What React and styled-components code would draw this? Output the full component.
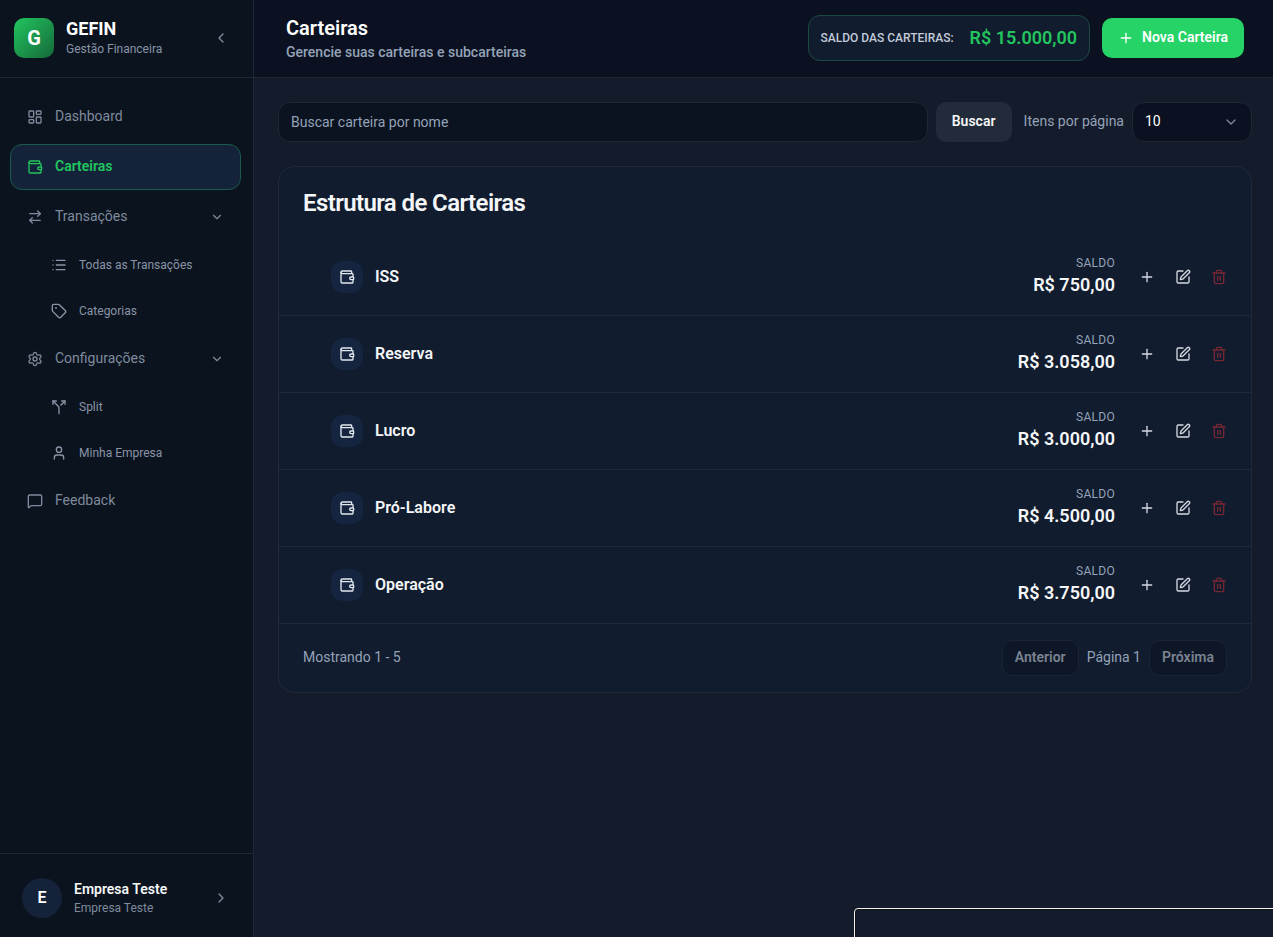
import React from "react";
import styled, { createGlobalStyle } from "styled-components";
import {
  LayoutDashboard, Wallet, ArrowRightLeft, List, Tag, Settings, Split, User,
  MessageSquare, ChevronLeft, ChevronDown, ChevronRight, Plus, SquarePen, Trash2,
} from "lucide-react";

const Global = createGlobalStyle`
  * { box-sizing: border-box; }
  html, body { margin: 0; padding: 0; height: 100%; overflow: hidden; background: #141b2b; }
  body { font-family: Roboto, "Liberation Sans", sans-serif; color: #fff; line-height: 1.5; }
`;

const Shell = styled.div`
  display: flex;
  height: 100vh;
  position: relative;
  overflow: hidden;
`;

const Sidebar = styled.aside`
  width: 254px;
  flex: none;
  display: flex;
  flex-direction: column;
  background: #0b131f;
  border-right: 1px solid #1e2936;
`;

const Brand = styled.div`
  height: 78px;
  flex: none;
  display: flex;
  align-items: center;
  padding: 0 24px 1px 14px;
  border-bottom: 1px solid #1e2936;
`;

const Logo = styled.div`
  width: 40px;
  height: 40px;
  border-radius: 10px;
  background: linear-gradient(135deg, #22c55e, #15693a);
  display: flex;
  align-items: center;
  justify-content: center;
  font-size: 20px;
  font-weight: 700;
  margin-right: 12px;
`;

const BrandText = styled.div`
  flex: 1;
  display: flex;
  flex-direction: column;
`;

const BrandName = styled.div`
  font-size: 18px;
  line-height: 20px;
  font-weight: 700;
  color: #fff;
`;

const BrandSub = styled.div`
  font-size: 12px;
  line-height: 16px;
  margin-top: 2px;
  color: #8994a6;
`;

const Nav = styled.nav`
  flex: 1;
  display: flex;
  flex-direction: column;
  padding: 16px 12px 0 10px;
`;

const NavItem = styled.div`
  height: 46px;
  flex: none;
  display: flex;
  align-items: center;
  gap: 12px;
  padding: 0 16px;
  margin-bottom: ${(p) => (p.$tight ? "0" : "4px")};
  border-radius: 12px;
  font-size: 14px;
  line-height: 20px;
  font-weight: ${(p) => (p.$active ? 600 : 400)};
  color: ${(p) => (p.$active ? "#22c55e" : "#7f8b9c")};
  background: ${(p) => (p.$active ? "#15233a" : "transparent")};
  border: 1px solid ${(p) => (p.$active ? "#1b5a4a" : "transparent")};
  & > svg:last-child:not(:first-child) { color: #7f8b9c; }
`;

const NavLabel = styled.span`
  flex: 1;
  margin-bottom: 2px;
`;

const SubList = styled.div`
  display: flex;
  flex-direction: column;
  margin: 2px 0;
`;

const SubItem = styled.div`
  height: 46px;
  display: flex;
  align-items: center;
  gap: 12px;
  padding-left: 41px;
  font-size: 12px;
  line-height: 16px;
  color: #8994a6;
`;

const Account = styled.div`
  height: 84px;
  flex: none;
  display: flex;
  align-items: center;
  padding: 4px 24px 0 22px;
  border-top: 1px solid #1e2936;
`;

const Avatar = styled.div`
  width: 40px;
  height: 40px;
  border-radius: 50%;
  background: #15233a;
  display: flex;
  align-items: center;
  justify-content: center;
  font-size: 16px;
  font-weight: 600;
  margin-right: 12px;
`;

const AccountText = styled.div`
  flex: 1;
`;

const AccountName = styled.div`
  font-size: 14px;
  line-height: 20px;
  font-weight: 600;
  color: #f4f6f8;
`;

const AccountSub = styled.div`
  font-size: 12px;
  line-height: 16px;
  margin-top: 1px;
  color: #7f8b9c;
`;

const Muted = styled.span`
  display: inline-flex;
  color: #7f8b9c;
`;

const Main = styled.main`
  flex: 1;
  min-width: 0;
  display: flex;
  flex-direction: column;
`;

const Header = styled.header`
  height: 78px;
  flex: none;
  display: flex;
  align-items: center;
  justify-content: space-between;
  padding: 0 29px 1px 32px;
  background: #0b1120;
  border-bottom: 1px solid #1e2936;
`;

const Title = styled.h1`
  margin: 0;
  font-size: 20px;
  line-height: 28px;
  font-weight: 600;
  color: #fff;
`;

const Subtitle = styled.p`
  margin: 0;
  font-size: 14px;
  line-height: 20px;
  font-weight: 500;
  color: #94a3b8;
`;

const HeaderActions = styled.div`
  display: flex;
  align-items: center;
  gap: 12px;
`;

const BalanceBox = styled.div`
  height: 46px;
  display: flex;
  align-items: center;
  gap: 16px;
  padding: 0 12px;
  border-radius: 12px;
  background: #111c2e;
  border: 1px solid #1b4a42;
`;

const BalanceLabel = styled.span`
  font-size: 12px;
  line-height: 16px;
  font-weight: 500;
  color: #c1cbd9;
`;

const BalanceValue = styled.span`
  font-size: 18px;
  line-height: 28px;
  font-weight: 600;
  color: #22c55e;
`;

const PrimaryButton = styled.button`
  height: 40px;
  display: flex;
  align-items: center;
  gap: 8px;
  padding: 0 16px;
  border: 0;
  border-radius: 10px;
  background: #25d366;
  color: #fff;
  font-family: inherit;
  font-size: 14px;
  line-height: 20px;
  font-weight: 600;
`;

const PrimaryLabel = styled.span`
  margin-bottom: 2px;
`;

const Content = styled.div`
  flex: 1;
  padding: 24px 21px 0 24px;
  display: flex;
  flex-direction: column;
  gap: 24px;
`;

const Filters = styled.div`
  display: flex;
  align-items: center;
  height: 40px;
`;

const SearchBox = styled.div`
  flex: 1;
  height: 40px;
  display: flex;
  align-items: center;
  padding: 0 12px;
  border-radius: 12px;
  background: #0b1220;
  border: 1px solid #1e2936;
  font-size: 14px;
  line-height: normal;
  color: #94a3b8;
`;

const SearchButton = styled.button`
  width: 76px;
  height: 40px;
  margin-left: 8px;
  padding: 0 0 2px;
  border: 0;
  border-radius: 10px;
  background: #222b39;
  color: #f4f6f8;
  font-family: inherit;
  font-size: 14px;
  line-height: 20px;
  font-weight: 600;
`;

const PerPage = styled.span`
  margin: 0 8px 2px 12px;
  font-size: 14px;
  line-height: 20px;
  color: #94a3b8;
`;

const Select = styled.div`
  width: 120px;
  height: 40px;
  display: flex;
  align-items: center;
  justify-content: space-between;
  padding: 0 12px;
  border-radius: 12px;
  background: #0b1120;
  border: 1px solid #1e2936;
  font-size: 14px;
  line-height: 20px;
  color: #fff;
`;

const SelectValue = styled.span`
  margin-bottom: 2px;
`;

const Card = styled.section`
  border-radius: 16px;
  background: #111c2e;
  border: 1px solid #1e2a3a;
`;

const CardTitle = styled.h2`
  margin: 0;
  height: 72px;
  padding: 20px 24px 0;
  font-size: 24px;
  line-height: 32px;
  font-weight: 600;
  letter-spacing: -0.6px;
  color: #f4f6f8;
`;

const Row = styled.div`
  height: 77px;
  display: flex;
  align-items: center;
  padding: 0 16px 0 52px;
  border-bottom: 1px solid #1e2a3a;
`;

const RowIcon = styled.div`
  width: 32px;
  height: 32px;
  border-radius: 12px;
  background: #15253f;
  color: #e2e8f0;
  display: flex;
  align-items: center;
  justify-content: center;
  margin-right: 12px;
`;

const RowName = styled.div`
  flex: 1;
  font-size: 16px;
  line-height: 24px;
  font-weight: 600;
  color: #f4f6f8;
`;

const RowBalance = styled.div`
  text-align: right;
  margin-right: 16px;
`;

const BalanceCaption = styled.div`
  font-size: 12px;
  line-height: 16px;
  letter-spacing: 0.3px;
  color: #94a3b8;
`;

const RowValue = styled.div`
  font-size: 18px;
  line-height: 28px;
  font-weight: 600;
  color: #f4f6f8;
`;

const IconButton = styled.button`
  width: 32px;
  height: 32px;
  padding: 0;
  margin-left: ${(p) => (p.$first ? "0" : "4px")};
  border: 0;
  background: transparent;
  display: flex;
  align-items: center;
  justify-content: center;
  color: ${(p) => (p.$danger ? "#762733" : "#d5dae2")};
`;

const CardFooter = styled.div`
  height: 68px;
  display: flex;
  align-items: center;
  justify-content: space-between;
  padding: 0 24px;
`;

const FooterText = styled.span`
  margin-bottom: 2px;
  font-size: 14px;
  line-height: 20px;
  color: #94a3b8;
`;

const Pager = styled.div`
  display: flex;
  align-items: center;
  gap: 8px;
`;

const PagerButton = styled.button`
  height: 36px;
  padding: 0 12px 2px;
  border-radius: 10px;
  background: #0e1727;
  border: 1px solid #1a2433;
  color: #7b8391;
  font-family: inherit;
  font-size: 14px;
  line-height: 20px;
  font-weight: 600;
`;

const ToastFrame = styled.div`
  position: absolute;
  left: 854px;
  top: 908px;
  width: 440px;
  height: 60px;
  border: 1px solid #f2f2f2;
  border-radius: 4px;
  box-shadow: inset 0 0 0 1px #111;
  background: #141b2b;
`;

const rows = [
  ["ISS", "R$ 750,00"],
  ["Reserva", "R$ 3.058,00"],
  ["Lucro", "R$ 3.000,00"],
  ["Pró-Labore", "R$ 4.500,00"],
  ["Operação", "R$ 3.750,00"],
];

export default function App() {
  return (
    <Shell>
      <Global />
      <Sidebar>
        <Brand>
          <Logo>G</Logo>
          <BrandText>
            <BrandName>GEFIN</BrandName>
            <BrandSub>Gestão Financeira</BrandSub>
          </BrandText>
          <Muted><ChevronLeft size={16} /></Muted>
        </Brand>
        <Nav>
          <NavItem><LayoutDashboard size={16} /><NavLabel>Dashboard</NavLabel></NavItem>
          <NavItem $active><Wallet size={16} /><NavLabel>Carteiras</NavLabel></NavItem>
          <NavItem $tight><ArrowRightLeft size={16} /><NavLabel>Transações</NavLabel><ChevronDown size={14} /></NavItem>
          <SubList>
            <SubItem><List size={16} />Todas as Transações</SubItem>
            <SubItem><Tag size={16} />Categorias</SubItem>
          </SubList>
          <NavItem $tight><Settings size={16} /><NavLabel>Configurações</NavLabel><ChevronDown size={14} /></NavItem>
          <SubList>
            <SubItem><Split size={16} />Split</SubItem>
            <SubItem><User size={16} />Minha Empresa</SubItem>
          </SubList>
          <NavItem><MessageSquare size={16} /><NavLabel>Feedback</NavLabel></NavItem>
        </Nav>
        <Account>
          <Avatar>E</Avatar>
          <AccountText>
            <AccountName>Empresa Teste</AccountName>
            <AccountSub>Empresa Teste</AccountSub>
          </AccountText>
          <Muted><ChevronRight size={16} /></Muted>
        </Account>
      </Sidebar>
      <Main>
        <Header>
          <div>
            <Title>Carteiras</Title>
            <Subtitle>Gerencie suas carteiras e subcarteiras</Subtitle>
          </div>
          <HeaderActions>
            <BalanceBox>
              <BalanceLabel>SALDO DAS CARTEIRAS:</BalanceLabel>
              <BalanceValue>R$ 15.000,00</BalanceValue>
            </BalanceBox>
            <PrimaryButton><Plus size={16} /><PrimaryLabel>Nova Carteira</PrimaryLabel></PrimaryButton>
          </HeaderActions>
        </Header>
        <Content>
          <Filters>
            <SearchBox>Buscar carteira por nome</SearchBox>
            <SearchButton>Buscar</SearchButton>
            <PerPage>Itens por página</PerPage>
            <Select><SelectValue>10</SelectValue><Muted><ChevronDown size={16} /></Muted></Select>
          </Filters>
          <Card>
            <CardTitle>Estrutura de Carteiras</CardTitle>
            {rows.map(([name, value]) => (
              <Row key={name}>
                <RowIcon><Wallet size={16} /></RowIcon>
                <RowName>{name}</RowName>
                <RowBalance>
                  <BalanceCaption>SALDO</BalanceCaption>
                  <RowValue>{value}</RowValue>
                </RowBalance>
                <IconButton $first><Plus size={16} /></IconButton>
                <IconButton><SquarePen size={16} /></IconButton>
                <IconButton $danger><Trash2 size={16} /></IconButton>
              </Row>
            ))}
            <CardFooter>
              <FooterText>Mostrando 1 - 5</FooterText>
              <Pager>
                <PagerButton>Anterior</PagerButton>
                <FooterText>Página 1</FooterText>
                <PagerButton>Próxima</PagerButton>
              </Pager>
            </CardFooter>
          </Card>
        </Content>
      </Main>
      <ToastFrame />
    </Shell>
  );
}
